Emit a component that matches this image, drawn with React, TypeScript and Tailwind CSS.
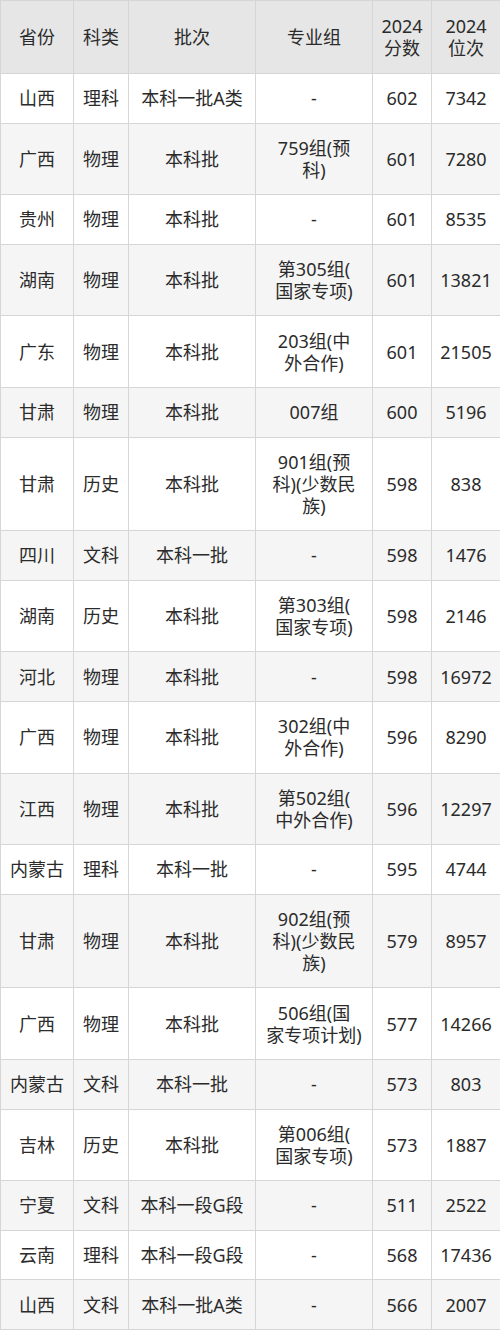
const rows: [string, string, string, string[], string, string][] = [
  ["山西", "理科", "本科一批A类", ["-"], "602", "7342"],
  ["广西", "物理", "本科批", ["759组(预", "科)"], "601", "7280"],
  ["贵州", "物理", "本科批", ["-"], "601", "8535"],
  ["湖南", "物理", "本科批", ["第305组(", "国家专项)"], "601", "13821"],
  ["广东", "物理", "本科批", ["203组(中", "外合作)"], "601", "21505"],
  ["甘肃", "物理", "本科批", ["007组"], "600", "5196"],
  ["甘肃", "历史", "本科批", ["901组(预", "科)(少数民", "族)"], "598", "838"],
  ["四川", "文科", "本科一批", ["-"], "598", "1476"],
  ["湖南", "历史", "本科批", ["第303组(", "国家专项)"], "598", "2146"],
  ["河北", "物理", "本科批", ["-"], "598", "16972"],
  ["广西", "物理", "本科批", ["302组(中", "外合作)"], "596", "8290"],
  ["江西", "物理", "本科批", ["第502组(", "中外合作)"], "596", "12297"],
  ["内蒙古", "理科", "本科一批", ["-"], "595", "4744"],
  ["甘肃", "物理", "本科批", ["902组(预", "科)(少数民", "族)"], "579", "8957"],
  ["广西", "物理", "本科批", ["506组(国", "家专项计划)"], "577", "14266"],
  ["内蒙古", "文科", "本科一批", ["-"], "573", "803"],
  ["吉林", "历史", "本科批", ["第006组(", "国家专项)"], "573", "1887"],
  ["宁夏", "文科", "本科一段G段", ["-"], "511", "2522"],
  ["云南", "理科", "本科一段G段", ["-"], "568", "17436"],
  ["山西", "文科", "本科一批A类", ["-"], "566", "2007"],
];

const th = "border border-[#d6d6d6] px-1 py-[14px] font-normal text-center align-middle";
const td = "border border-[#d6d6d6] px-1 py-[13.3px] text-center align-middle whitespace-nowrap";

export default function App() {
  return (
    <div
      className="w-[500px] bg-white text-[18px] leading-[22px] text-[#2b2b2b]"
      style={{ fontFamily: '"Noto Sans", "Noto Sans CJK SC", sans-serif' }}
    >
      <table className="w-full table-fixed border-collapse">
        <colgroup>
          <col className="w-[73px]" />
          <col className="w-[55px]" />
          <col className="w-[127px]" />
          <col className="w-[117px]" />
          <col className="w-[59px]" />
          <col className="w-[69px]" />
        </colgroup>
        <thead>
          <tr className="bg-[#e6e6e6]">
            <th className={th}>省份</th>
            <th className={th}>科类</th>
            <th className={th}>批次</th>
            <th className={th}>专业组</th>
            <th className={th}>
              2024
              <br />
              分数
            </th>
            <th className={th}>
              2024
              <br />
              位次
            </th>
          </tr>
        </thead>
        <tbody>
          {rows.map((r, i) => (
            <tr key={i} className={i % 2 === 1 ? "bg-[#f5f5f5]" : "bg-white"}>
              <td className={td}>{r[0]}</td>
              <td className={td}>{r[1]}</td>
              <td className={td}>{r[2]}</td>
              <td className={td}>
                {r[3].map((line, j) => (
                  <div key={j}>{line}</div>
                ))}
              </td>
              <td className={td}>{r[4]}</td>
              <td className={td}>{r[5]}</td>
            </tr>
          ))}
        </tbody>
      </table>
    </div>
  );
}
